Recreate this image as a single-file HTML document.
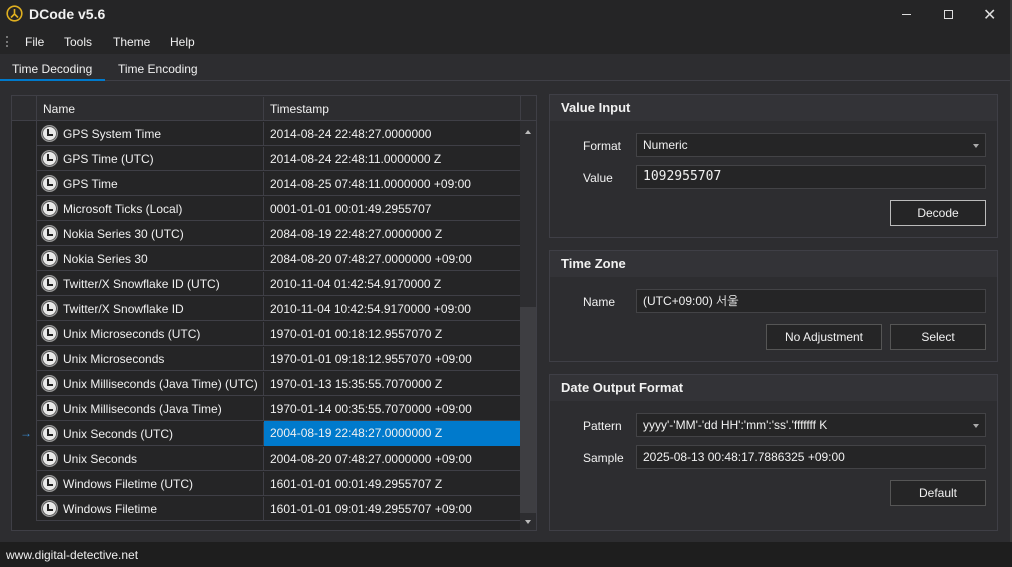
<!DOCTYPE html>
<html><head><meta charset="utf-8"><style>
*{box-sizing:border-box;margin:0;padding:0}
body{width:1012px;height:567px;background:#2d2d30;font-family:"Liberation Sans","NanumGothic",sans-serif;font-size:12px;color:#f1f1f1;position:relative;overflow:hidden}
.abs{position:absolute}
.title{left:0;top:0;width:1012px;height:54px;background:#252526}
.grid{left:11px;top:95px;width:526px;height:436px;border:1px solid #3f3f46;background:#252526}
.row{position:absolute;left:25px;height:25px;width:483px;border-bottom:1px solid #3f3f46}
.row div{position:absolute;top:1px;height:24px;line-height:24px}
.c1{left:0;width:227px;border-right:1px solid #3f3f46;padding-left:26px}
.c2{left:227px;width:256px;padding-left:6px}
.clk{position:absolute;left:4px;top:4px;width:17px;height:17px;border-radius:50%;background:#e8e8e8;border:1px solid #999;box-shadow:inset 0 0 0 1px #555,inset 0 0 0 2px #eee}
.clk:after{content:"";position:absolute;left:5px;top:3px;width:4px;height:5px;border-left:2px solid #222;border-bottom:2px solid #222}
.panel{left:549px;width:449px;border:1px solid #3f3f46;background:#2d2d30}
.ph{height:26px;background:#333337;font-weight:bold;font-size:13px;line-height:26px;padding-left:11px}
.lbl{position:absolute;font-size:12px}
.inp{position:absolute;left:86px;width:350px;height:24px;border:1px solid #434346;background:#252526;padding-left:6px;line-height:22px}
.btn{position:absolute;height:26px;border:1px solid #555;background:#252526;text-align:center;line-height:24px}
.dd:after{content:"";position:absolute;right:6px;top:10px;border:3px solid transparent;border-top:4px solid #aaa}
</style></head><body>
<div class="abs title"></div>
<svg class="abs" style="left:6px;top:5px" width="17" height="17" viewBox="0 0 17 17"><circle cx="8.5" cy="8.5" r="7.3" fill="none" stroke="#e0b020" stroke-width="1.6"/><path d="M8.5 4v5M8.5 9L5 12.5M8.5 9L12 12.5" stroke="#e0b020" stroke-width="1.6" fill="none"/></svg>
<div class="abs" style="left:29px;top:6px;font-weight:bold;font-size:14px">DCode v5.6</div>
<div class="abs" style="left:902px;top:14px;width:9px;height:1px;background:#ddd"></div>
<div class="abs" style="left:944px;top:10px;width:9px;height:9px;border:1px solid #ddd"></div>
<div class="abs" style="left:983px;top:5px;font-size:16px;color:#ddd">✕</div>
<div class="abs" style="left:6px;top:36px;width:2px;height:11px;border-left:2px dotted #777"></div>
<div class="abs" style="left:25px;top:35px">File</div>
<div class="abs" style="left:64px;top:35px">Tools</div>
<div class="abs" style="left:113px;top:35px">Theme</div>
<div class="abs" style="left:170px;top:35px">Help</div>
<div class="abs" style="left:12px;top:62px">Time Decoding</div>
<div class="abs" style="left:118px;top:62px">Time Encoding</div>
<div class="abs" style="left:0;top:80px;width:1012px;height:1px;background:#3f3f46"></div>
<div class="abs" style="left:0;top:79px;width:105px;height:2px;background:#007acc"></div>
<div class="abs" style="left:1010px;top:0;width:2px;height:567px;background:#3a3a3a"></div>

<div class="abs grid">
<div class="row" style="top:0;background:#2d2d30;width:483px"><div class="c1" style="padding-left:6px">Name</div><div class="c2">Timestamp</div></div>
<div class="abs" style="left:0;top:0;width:25px;height:25px;border-right:1px solid #3f3f46;border-bottom:1px solid #3f3f46;background:#2d2d30"></div>
<div class="abs" style="left:508px;top:0;width:16px;height:25px;border-left:1px solid #3f3f46;border-bottom:1px solid #3f3f46;background:#2d2d30"></div>
<div class="abs" style="left:24px;top:25px;width:1px;height:400px;background:#3f3f46"></div>
<div class="abs" style="left:508px;top:25px;width:16px;height:409px;background:#2d2d30"></div>
<div class="abs" style="left:508px;top:211px;width:16px;height:206px;background:#3e3e42"></div>
<div class="abs" style="left:513px;top:31px;border:3px solid transparent;border-bottom:4px solid #bbb"></div>
<div class="abs" style="left:513px;top:424px;border:3px solid transparent;border-top:4px solid #bbb"></div>
<div class="abs" style="left:8px;top:330px;color:#3c8fd6;font-size:12px">→</div>

<div class="row" style="top:25px"><span class="clk"></span><div class="c1">GPS System Time</div><div class="c2">2014-08-24 22:48:27.0000000</div></div>
<div class="row" style="top:50px"><span class="clk"></span><div class="c1">GPS Time (UTC)</div><div class="c2">2014-08-24 22:48:11.0000000 Z</div></div>
<div class="row" style="top:75px"><span class="clk"></span><div class="c1">GPS Time</div><div class="c2">2014-08-25 07:48:11.0000000 +09:00</div></div>
<div class="row" style="top:100px"><span class="clk"></span><div class="c1">Microsoft Ticks (Local)</div><div class="c2">0001-01-01 00:01:49.2955707</div></div>
<div class="row" style="top:125px"><span class="clk"></span><div class="c1">Nokia Series 30 (UTC)</div><div class="c2">2084-08-19 22:48:27.0000000 Z</div></div>
<div class="row" style="top:150px"><span class="clk"></span><div class="c1">Nokia Series 30</div><div class="c2">2084-08-20 07:48:27.0000000 +09:00</div></div>
<div class="row" style="top:175px"><span class="clk"></span><div class="c1">Twitter/X Snowflake ID (UTC)</div><div class="c2">2010-11-04 01:42:54.9170000 Z</div></div>
<div class="row" style="top:200px"><span class="clk"></span><div class="c1">Twitter/X Snowflake ID</div><div class="c2">2010-11-04 10:42:54.9170000 +09:00</div></div>
<div class="row" style="top:225px"><span class="clk"></span><div class="c1">Unix Microseconds (UTC)</div><div class="c2">1970-01-01 00:18:12.9557070 Z</div></div>
<div class="row" style="top:250px"><span class="clk"></span><div class="c1">Unix Microseconds</div><div class="c2">1970-01-01 09:18:12.9557070 +09:00</div></div>
<div class="row" style="top:275px"><span class="clk"></span><div class="c1">Unix Milliseconds (Java Time) (UTC)</div><div class="c2">1970-01-13 15:35:55.7070000 Z</div></div>
<div class="row" style="top:300px"><span class="clk"></span><div class="c1">Unix Milliseconds (Java Time)</div><div class="c2">1970-01-14 00:35:55.7070000 +09:00</div></div>
<div class="row" style="top:325px"><span class="clk"></span><div class="c1">Unix Seconds (UTC)</div><div class="c2" style="background:#007acc;top:0;height:25px;line-height:25px">2004-08-19 22:48:27.0000000 Z</div></div>
<div class="row" style="top:350px"><span class="clk"></span><div class="c1">Unix Seconds</div><div class="c2">2004-08-20 07:48:27.0000000 +09:00</div></div>
<div class="row" style="top:375px"><span class="clk"></span><div class="c1">Windows Filetime (UTC)</div><div class="c2">1601-01-01 00:01:49.2955707 Z</div></div>
<div class="row" style="top:400px"><span class="clk"></span><div class="c1">Windows Filetime</div><div class="c2">1601-01-01 09:01:49.2955707 +09:00</div></div>
</div>

<div class="abs panel" style="top:94px;height:144px">
<div class="ph">Value Input</div>
<div class="lbl" style="left:33px;top:44px">Format</div>
<div class="inp dd" style="top:38px">Numeric</div>
<div class="lbl" style="left:33px;top:76px">Value</div>
<div class="inp" style="top:70px;font-family:'DejaVu Sans Mono','Liberation Mono',monospace;font-size:13px">1092955707</div>
<div class="btn" style="left:340px;top:105px;width:96px;border-color:#bbb">Decode</div>
</div>

<div class="abs panel" style="top:250px;height:112px">
<div class="ph">Time Zone</div>
<div class="lbl" style="left:33px;top:44px">Name</div>
<div class="inp" style="top:38px">(UTC+09:00) 서울</div>
<div class="btn" style="left:216px;top:73px;width:116px">No Adjustment</div>
<div class="btn" style="left:340px;top:73px;width:96px">Select</div>
</div>

<div class="abs panel" style="top:374px;height:157px">
<div class="ph">Date Output Format</div>
<div class="lbl" style="left:33px;top:44px">Pattern</div>
<div class="inp dd" style="top:38px">yyyy'-'MM'-'dd HH':'mm':'ss'.'fffffff K</div>
<div class="lbl" style="left:33px;top:76px">Sample</div>
<div class="inp" style="top:70px">2025-08-13 00:48:17.7886325 +09:00</div>
<div class="btn" style="left:340px;top:105px;width:96px">Default</div>
</div>

<div class="abs" style="left:0;top:542px;width:1012px;height:25px;background:#1e1e1e"></div>
<div class="abs" style="left:6px;top:548px">www.digital-detective.net</div>
</body></html>
